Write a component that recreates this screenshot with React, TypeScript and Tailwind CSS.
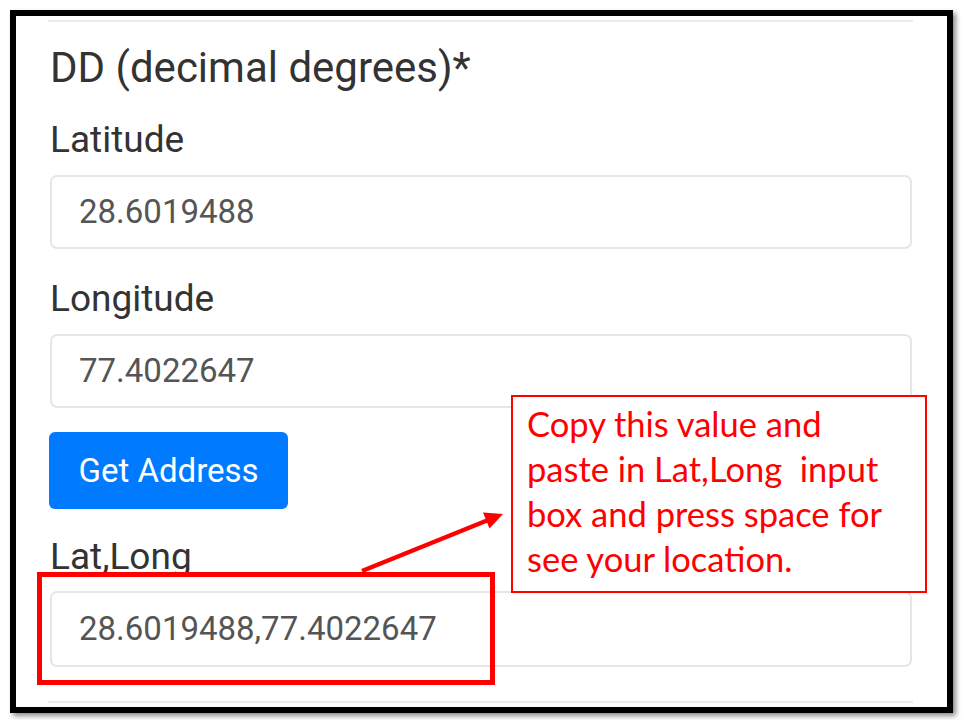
export default function App() {
  const fields = [
    { label: "Latitude", value: "28.6019488" },
    { label: "Longitude", value: "77.4022647" },
  ];

  return (
    <div className="relative w-[962px] h-[720px] overflow-hidden bg-white pl-[10px] pt-[10px] font-[family-name:Roboto,sans-serif]">
      {/* phone screenshot frame */}
      <div className="w-[943px] h-[703px] border-[6px] border-black bg-white shadow-[3px_3px_5px_rgba(0,0,0,0.45)]">
        <div className="flex flex-col px-[32px] pt-[4px]">
          <div className="h-[2px] mr-[2px] bg-[#ececec]" />

          <h2 className="mt-[25px] ml-[2px] text-[42px] leading-none text-[#333]">
            DD (decimal degrees)*
          </h2>

          {fields.map((f, i) => (
            <div key={f.label} className="flex flex-col">
              <label
                className={`${i === 0 ? "mt-[32px]" : "mt-[31px]"} ml-[2px] text-[37px] leading-none text-[#333]`}
              >
                {f.label}
              </label>
              <div className="mt-[17px] ml-[2px] mr-[3px] h-[74px] flex items-center rounded-[7px] border-2 border-[#e6e6e6] pl-[27px] text-[33px] text-[#555]">
                {f.value}
              </div>
            </div>
          ))}

          <button className="mt-[24px] ml-[1px] w-[239px] h-[77px] rounded-[6px] bg-[#007bff] text-white text-[33px] leading-none">
            Get Address
          </button>

          <label className="mt-[29px] ml-[2px] text-[37px] leading-none text-[#333]">
            Lat,Long
          </label>
          <div className="mt-[16px] ml-[2px] mr-[3px] h-[76px] flex items-center rounded-[7px] border-2 border-[#e6e6e6] pl-[27px] text-[33px] text-[#555]">
            28.6019488,77.4022647
          </div>

          <div className="mt-[34px] h-[2px] mr-[2px] bg-[#ececec]" />
        </div>
      </div>

      {/* annotation overlay */}
      <div className="absolute left-[37px] top-[572px] w-[458px] h-[113px] border-[5px] border-[#ff0000]" />

      <svg className="absolute inset-0 pointer-events-none" width="962" height="720">
        <line x1="362" y1="571" x2="487" y2="520.5" stroke="#ff0000" strokeWidth="4.5" />
        <polygon points="503,514 489.5,528.5 483,512.5" fill="#ff0000" />
      </svg>

      <div className="absolute left-[511px] top-[395px] w-[416px] h-[198px] border-2 border-[#ff0000] bg-white pl-[14px] pt-[4px] font-[family-name:Lato,sans-serif] text-[34.5px] leading-[45px] text-[#ff0000] whitespace-pre">
        {"Copy this value and\npaste in Lat,Long  input\nbox and press space for\nsee your location."}
      </div>
    </div>
  );
}
